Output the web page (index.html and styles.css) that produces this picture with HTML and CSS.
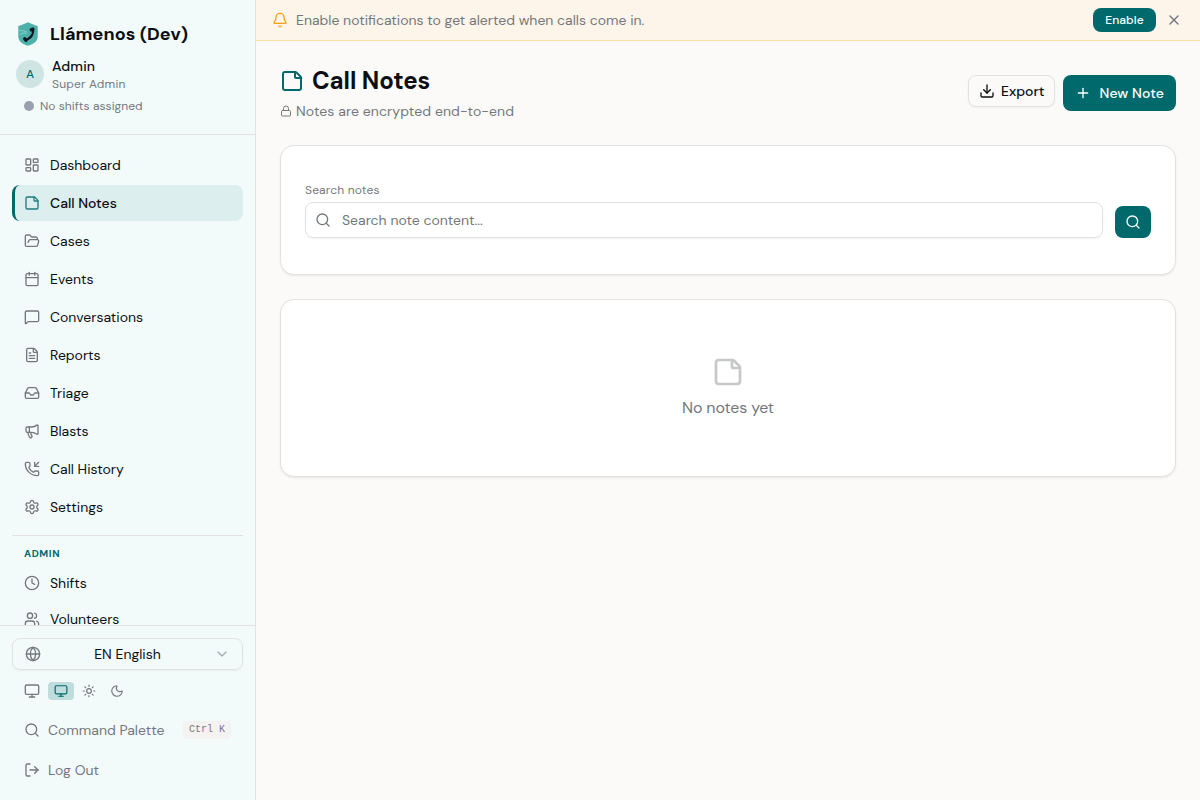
FILE: index.html
```
<!DOCTYPE html>
<html lang="en">
<head>
  <meta charset="UTF-8" />
  <meta name="viewport" content="width=device-width, initial-scale=1.0"/>
  <title>Llámenos (Dev) - Call Notes</title>
  <link rel="stylesheet" href="styles.css">
</head>
<body>
  <!-- icon set -->
  <svg class="icon-defs" aria-hidden="true">
    <symbol id="i-dashboard" viewBox="0 0 24 24"><rect width="7" height="9" x="3" y="3" rx="1"/><rect width="7" height="5" x="14" y="3" rx="1"/><rect width="7" height="9" x="14" y="12" rx="1"/><rect width="7" height="5" x="3" y="16" rx="1"/></symbol>
    <symbol id="i-note" viewBox="0 0 24 24"><path d="M21 9a2.4 2.4 0 0 0-.706-1.706l-3.588-3.588A2.4 2.4 0 0 0 15 3H5a2 2 0 0 0-2 2v14a2 2 0 0 0 2 2h14a2 2 0 0 0 2-2z"/><path d="M15 3v5a1 1 0 0 0 1 1h5"/></symbol>
    <symbol id="i-folder" viewBox="0 0 24 24"><path d="m6 14 1.5-2.9A2 2 0 0 1 9.24 10H20a2 2 0 0 1 1.94 2.5l-1.54 6a2 2 0 0 1-1.95 1.5H4a2 2 0 0 1-2-2V5a2 2 0 0 1 2-2h3.9a2 2 0 0 1 1.69.9l.81 1.2a2 2 0 0 0 1.67.9H18a2 2 0 0 1 2 2v2"/></symbol>
    <symbol id="i-calendar" viewBox="0 0 24 24"><path d="M8 2v4"/><path d="M16 2v4"/><rect width="18" height="18" x="3" y="4" rx="2"/><path d="M3 10h18"/></symbol>
    <symbol id="i-message" viewBox="0 0 24 24"><path d="M22 17a2 2 0 0 1-2 2H6.828a2 2 0 0 0-1.414.586l-2.202 2.202A.71.71 0 0 1 2 21.286V5a2 2 0 0 1 2-2h16a2 2 0 0 1 2 2z"/></symbol>
    <symbol id="i-file" viewBox="0 0 24 24"><path d="M6 22a2 2 0 0 1-2-2V4a2 2 0 0 1 2-2h8a2.4 2.4 0 0 1 1.704.706l3.588 3.588A2.4 2.4 0 0 1 20 8v12a2 2 0 0 1-2 2z"/><path d="M14 2v5a1 1 0 0 0 1 1h5"/><path d="M10 9H8"/><path d="M16 13H8"/><path d="M16 17H8"/></symbol>
    <symbol id="i-inbox" viewBox="0 0 24 24"><path d="M22 12h-6l-2 3h-4l-2-3H2"/><path d="M5.45 5.11 2 12v6a2 2 0 0 0 2 2h16a2 2 0 0 0 2-2v-6l-3.45-6.89A2 2 0 0 0 16.76 4H7.24a2 2 0 0 0-1.79 1.11z"/></symbol>
    <symbol id="i-megaphone" viewBox="0 0 24 24"><path d="M11 6a13 13 0 0 0 8.4-2.8A1 1 0 0 1 21 4v12a1 1 0 0 1-1.6.8A13 13 0 0 0 11 14H5a2 2 0 0 1-2-2V8a2 2 0 0 1 2-2z"/><path d="M6 14a12 12 0 0 0 2.4 7.2 2 2 0 0 0 3.2-2.4A8 8 0 0 1 10 14"/><path d="M8 6v8"/></symbol>
    <symbol id="i-phone" viewBox="0 0 24 24"><path d="M16 2v6h6"/><path d="m22 2-6 6"/><path d="M13.832 16.568a1 1 0 0 0 1.213-.303l.355-.465A2 2 0 0 1 17 15h3a2 2 0 0 1 2 2v3a2 2 0 0 1-2 2A18 18 0 0 1 2 4a2 2 0 0 1 2-2h3a2 2 0 0 1 2 2v3a2 2 0 0 1-.8 1.6l-.468.351a1 1 0 0 0-.292 1.233 14 14 0 0 0 6.392 6.384"/></symbol>
    <symbol id="i-settings" viewBox="0 0 24 24"><path d="M9.671 4.136a2.34 2.34 0 0 1 4.659 0 2.34 2.34 0 0 0 3.319 1.915 2.34 2.34 0 0 1 2.33 4.033 2.34 2.34 0 0 0 0 3.831 2.34 2.34 0 0 1-2.33 4.033 2.34 2.34 0 0 0-3.319 1.915 2.34 2.34 0 0 1-4.659 0 2.34 2.34 0 0 0-3.32-1.915 2.34 2.34 0 0 1-2.33-4.033 2.34 2.34 0 0 0 0-3.831A2.34 2.34 0 0 1 6.35 6.051a2.34 2.34 0 0 0 3.319-1.915"/><circle cx="12" cy="12" r="3"/></symbol>
    <symbol id="i-clock" viewBox="0 0 24 24"><circle cx="12" cy="12" r="10"/><path d="M12 6v6l4 2"/></symbol>
    <symbol id="i-users" viewBox="0 0 24 24"><path d="M16 21v-2a4 4 0 0 0-4-4H6a4 4 0 0 0-4 4v2"/><path d="M16 3.128a4 4 0 0 1 0 7.744"/><path d="M22 21v-2a4 4 0 0 0-3-3.87"/><circle cx="9" cy="7" r="4"/></symbol>
    <symbol id="i-globe" viewBox="0 0 24 24"><circle cx="12" cy="12" r="10"/><path d="M12 2a14.5 14.5 0 0 0 0 20 14.5 14.5 0 0 0 0-20"/><path d="M2 12h20"/></symbol>
    <symbol id="i-chevron" viewBox="0 0 24 24"><path d="m6 9 6 6 6-6"/></symbol>
    <symbol id="i-monitor" viewBox="0 0 24 24"><rect width="20" height="14" x="2" y="3" rx="2"/><path d="M8 21h8"/><path d="M12 17v4"/></symbol>
    <symbol id="i-sun" viewBox="0 0 24 24"><circle cx="12" cy="12" r="4"/><path d="M12 2v2"/><path d="M12 20v2"/><path d="m4.93 4.93 1.41 1.41"/><path d="m17.66 17.66 1.41 1.41"/><path d="M2 12h2"/><path d="M20 12h2"/><path d="m6.34 17.66-1.41 1.41"/><path d="m19.07 4.93-1.41 1.41"/></symbol>
    <symbol id="i-moon" viewBox="0 0 24 24"><path d="M20.985 12.486a9 9 0 1 1-9.473-9.472c.405-.022.617.46.402.803a6 6 0 0 0 8.268 8.268c.344-.215.825-.004.803.401"/></symbol>
    <symbol id="i-search" viewBox="0 0 24 24"><path d="m21 21-4.34-4.34"/><circle cx="11" cy="11" r="8"/></symbol>
    <symbol id="i-logout" viewBox="0 0 24 24"><path d="m16 17 5-5-5-5"/><path d="M21 12H9"/><path d="M9 21H5a2 2 0 0 1-2-2V5a2 2 0 0 1 2-2h4"/></symbol>
    <symbol id="i-bell" viewBox="0 0 24 24"><path d="M10.268 21a2 2 0 0 0 3.464 0"/><path d="M3.262 15.326A1 1 0 0 0 4 17h16a1 1 0 0 0 .74-1.673C19.41 13.956 18 12.499 18 8A6 6 0 0 0 6 8c0 4.499-1.411 5.956-2.738 7.326"/></symbol>
    <symbol id="i-x" viewBox="0 0 24 24"><path d="M18 6 6 18"/><path d="m6 6 12 12"/></symbol>
    <symbol id="i-lock" viewBox="0 0 24 24"><rect width="18" height="11" x="3" y="11" rx="2"/><path d="M7 11V7a5 5 0 0 1 10 0v4"/></symbol>
    <symbol id="i-download" viewBox="0 0 24 24"><path d="M12 15V3"/><path d="M21 15v4a2 2 0 0 1-2 2H5a2 2 0 0 1-2-2v-4"/><path d="m7 10 5 5 5-5"/></symbol>
    <symbol id="i-plus" viewBox="0 0 24 24"><path d="M5 12h14"/><path d="M12 5v14"/></symbol>
  </svg>

  <div class="app">
    <aside class="sidebar">
      <div class="sidebar-header">
        <div class="brand">
          <svg class="logo" viewBox="0 0 24 24">
            <path d="M12 .3c3 1.600 6.200 2.600 9.700 3.700V14c0 5.200-3.700 8.200-9.700 9.700C6 22.200 2.300 19.200 2.300 14V4C5.800 2.900 9 1.900 12 .3z" fill="#4eb0ab"/>
            <path d="M2.300 8.800c3-.6 6-.4 8.500 1.400M4 12.500c2-1.300 4.300-1.700 6.500-1" fill="none" stroke="#7dcac6" stroke-width="1.200"/>
            <path d="M17.200 7.500c.2 4.600-2.700 8.800-7.400 10.700" fill="none" stroke="#0c1a22" stroke-width="2.200"/>
            <path d="M15.200 7.800l1.700-.6M8.700 16.800l1.200 1.500" fill="none" stroke="#0c1a22" stroke-width="3.400" stroke-linecap="round"/>
          </svg>
          <span class="brand-name">Llámenos (Dev)</span>
        </div>
        <div class="user">
          <div class="avatar">A</div>
          <div>
            <div class="user-name">Admin</div>
            <div class="user-role">Super Admin</div>
          </div>
        </div>
        <div class="shift-status"><span class="dot"></span>No shifts assigned</div>
      </div>

      <nav class="nav">
        <a class="nav-item"><svg class="icon"><use href="#i-dashboard"/></svg>Dashboard</a>
        <a class="nav-item active"><svg class="icon"><use href="#i-note"/></svg>Call Notes</a>
        <a class="nav-item"><svg class="icon"><use href="#i-folder"/></svg>Cases</a>
        <a class="nav-item"><svg class="icon"><use href="#i-calendar"/></svg>Events</a>
        <a class="nav-item"><svg class="icon"><use href="#i-message"/></svg>Conversations</a>
        <a class="nav-item"><svg class="icon"><use href="#i-file"/></svg>Reports</a>
        <a class="nav-item"><svg class="icon"><use href="#i-inbox"/></svg>Triage</a>
        <a class="nav-item"><svg class="icon"><use href="#i-megaphone"/></svg>Blasts</a>
        <a class="nav-item"><svg class="icon"><use href="#i-phone"/></svg>Call History</a>
        <a class="nav-item"><svg class="icon"><use href="#i-settings"/></svg>Settings</a>
        <div class="nav-section">
          <div class="nav-heading">ADMIN</div>
          <a class="nav-item"><svg class="icon"><use href="#i-clock"/></svg>Shifts</a>
          <a class="nav-item"><svg class="icon"><use href="#i-users"/></svg>Volunteers</a>
        </div>
      </nav>

      <div class="sidebar-footer">
        <button class="lang-select">
          <svg class="icon"><use href="#i-globe"/></svg>
          <span>EN English</span>
          <svg class="icon chevron"><use href="#i-chevron"/></svg>
        </button>
        <div class="theme-row">
          <svg class="icon"><use href="#i-monitor"/></svg>
          <div class="theme-options">
            <button class="theme-btn selected"><svg class="icon"><use href="#i-monitor"/></svg></button>
            <button class="theme-btn"><svg class="icon"><use href="#i-sun"/></svg></button>
            <button class="theme-btn"><svg class="icon"><use href="#i-moon"/></svg></button>
          </div>
        </div>
        <a class="footer-link"><svg class="icon"><use href="#i-search"/></svg><span>Command Palette</span><kbd>Ctrl K</kbd></a>
        <a class="footer-link"><svg class="icon"><use href="#i-logout"/></svg><span>Log Out</span></a>
      </div>
    </aside>

    <div class="content">
      <div class="banner">
        <svg class="icon bell"><use href="#i-bell"/></svg>
        <p>Enable notifications to get alerted when calls come in.</p>
        <button class="btn btn-primary btn-xs">Enable</button>
        <button class="dismiss"><svg class="icon"><use href="#i-x"/></svg></button>
      </div>

      <main>
        <div class="page-header">
          <div>
            <h1><svg class="icon"><use href="#i-note"/></svg>Call Notes</h1>
            <p class="subtitle"><svg class="icon"><use href="#i-lock"/></svg>Notes are encrypted end-to-end</p>
          </div>
          <div class="actions">
            <button class="btn btn-outline"><svg class="icon"><use href="#i-download"/></svg>Export</button>
            <button class="btn btn-primary"><svg class="icon"><use href="#i-plus"/></svg>New Note</button>
          </div>
        </div>

        <section class="card search-card">
          <div class="field">
            <label for="search">Search notes</label>
            <div class="input-wrap">
              <svg class="icon"><use href="#i-search"/></svg>
              <input type="text" id="search" placeholder="Search note content...">
            </div>
          </div>
          <button class="btn btn-primary btn-search"><svg class="icon"><use href="#i-search"/></svg></button>
        </section>

        <section class="card empty-card">
          <svg class="icon"><use href="#i-note"/></svg>
          <p>No notes yet</p>
        </section>
      </main>
    </div>
  </div>
</body>
</html>
```

FILE: styles.css
```
* {
  box-sizing: border-box;
}
body {
  margin: 0;
  font-family: "DM Sans", Inter, "Liberation Sans", sans-serif;
  font-size: 14px;
  line-height: 20px;
  color: #0b0f14;
  background-color: #fbfaf8;
}
p, h1 {
  margin: 0;
}
button, input {
  font: inherit;
  letter-spacing: inherit;
  color: inherit;
}
.icon-defs {
  display: none;
}
.icon {
  width: 16px;
  height: 16px;
  flex-shrink: 0;
  fill: none;
  stroke: currentColor;
  stroke-width: 2;
  stroke-linecap: round;
  stroke-linejoin: round;
}
.app {
  display: flex;
  height: 100vh;
}

/* sidebar */
.sidebar {
  width: 256px;
  flex-shrink: 0;
  display: flex;
  flex-direction: column;
  background-color: #f2fbfa;
  border-right: 1px solid #e4e2e0;
}
.sidebar-header {
  height: 135px;
  padding: 20px 16px 0;
  border-bottom: 1px solid #e4e2e0;
}
.brand {
  display: flex;
  align-items: center;
  gap: 10px;
  height: 28px;
}
.logo {
  width: 24px;
  height: 24px;
}
.brand-name {
  font-size: 18px;
  line-height: 28px;
  font-weight: 700;
  letter-spacing: 0.07px;
}
.user {
  display: flex;
  align-items: center;
  gap: 8px;
  margin-top: 8px;
}
.avatar {
  width: 28px;
  height: 28px;
  border-radius: 50%;
  background-color: #cee5e4;
  color: #00696b;
  font-size: 12px;
  font-weight: 500;
  line-height: 28px;
  text-align: center;
}
.user-name {
  font-weight: 500;
  line-height: 20px;
  letter-spacing: 0.15px;
}
.user-role {
  font-size: 12px;
  line-height: 16px;
  letter-spacing: 0.2px;
  color: #74787e;
}
.shift-status {
  display: flex;
  align-items: center;
  gap: 6px;
  margin-top: 6px;
  padding-left: 8px;
  font-size: 12px;
  line-height: 16px;
  letter-spacing: 0.05px;
  color: #74787e;
}
.dot {
  width: 10px;
  height: 10px;
  border-radius: 50%;
  background-color: #99a1af;
}
.nav {
  flex: 1;
  min-height: 0;
  overflow: hidden;
  padding: 12px;
}
.nav-item {
  display: flex;
  align-items: center;
  gap: 10px;
  height: 36px;
  margin-bottom: 2px;
  padding: 0 12px;
  border-radius: 8px;
}
.nav-item .icon {
  color: #74787e;
}
.nav-item.active {
  padding-left: 9px;
  border-left: 3px solid #00696b;
  background-color: #dceeee;
  font-weight: 500;
}
.nav-item.active .icon {
  color: #00696b;
  opacity: 0.85;
}
.nav-section {
  margin-top: 10px;
  border-top: 1px solid #e4e2e0;
}
.nav-section .nav-item {
  margin-bottom: 0;
}
.nav-heading {
  padding: 10px 12px 4px;
  font-size: 10px;
  line-height: 15px;
  font-weight: 700;
  letter-spacing: 0.6px;
  color: #00696b;
}
.sidebar-footer {
  height: 175px;
  padding: 12px;
  border-top: 1px solid #e4e2e0;
  color: #74787e;
}
.lang-select {
  display: flex;
  align-items: center;
  justify-content: space-between;
  width: 100%;
  height: 32px;
  padding: 0 12px;
  border: 1px solid #e4e2e0;
  border-radius: 8px;
  background-color: transparent;
  box-shadow: 0 1px 2px rgba(0, 0, 0, 0.05);
}
.lang-select span {
  color: #0b0f14;
}
.chevron {
  opacity: 0.6;
}
.theme-row {
  display: flex;
  align-items: center;
  gap: 8px;
  height: 42px;
  padding: 0 12px;
}
.theme-options {
  display: flex;
  gap: 2px;
}
.theme-btn {
  display: flex;
  align-items: center;
  justify-content: center;
  width: 26px;
  height: 18px;
  padding: 0;
  border: none;
  border-radius: 4px;
  background-color: transparent;
}
.theme-btn .icon {
  width: 14px;
  height: 14px;
}
.theme-btn.selected {
  background-color: #bfdddc;
  color: #00696b;
}
.footer-link {
  display: flex;
  align-items: center;
  gap: 8px;
  height: 36px;
  padding: 0 12px;
  margin-bottom: 4px;
}
kbd {
  height: 18px;
  margin-left: auto;
  padding: 0 6px;
  border-radius: 4px;
  background-color: #f5f3f1;
  font-family: "Liberation Mono", monospace;
  font-size: 10px;
  line-height: 18px;
}

/* notification banner */
.content {
  flex: 1;
  min-width: 0;
}
.banner {
  display: flex;
  align-items: center;
  height: 41px;
  padding: 0 16px;
  border-bottom: 1px solid #ffdfa8;
  background-color: #fdf4ea;
  color: #74787e;
}
.banner p {
  flex: 1;
  margin-left: 8px;
}
.bell {
  color: #fb9f10;
}
.dismiss {
  display: flex;
  margin-left: 8px;
  padding: 2px;
  border: none;
  background: none;
}

/* buttons */
.btn {
  display: flex;
  align-items: center;
  justify-content: center;
  gap: 8px;
  height: 36px;
  padding: 0 12px;
  border: none;
  border-radius: 8px;
  font-weight: 500;
}
.btn-primary {
  background-color: #00696b;
  color: #fff;
  letter-spacing: 0.1px;
}
.btn-outline {
  height: 32px;
  gap: 6px;
  padding: 0 10px;
  border: 1px solid #e4e2e0;
  background-color: #fbfaf8;
  box-shadow: 0 1px 2px rgba(0, 0, 0, 0.05);
}
.btn-xs {
  width: 63px;
  height: 24px;
  font-size: 12px;
}

main {
  padding: 24px;
}
.page-header {
  display: flex;
  justify-content: space-between;
  align-items: center;
  height: 56px;
  margin-bottom: 24px;
}
h1 {
  display: flex;
  align-items: center;
  gap: 8px;
  font-size: 24px;
  line-height: 32px;
  font-weight: 700;
  letter-spacing: -0.1px;
}
h1 .icon {
  width: 24px;
  height: 24px;
  color: #00696b;
}
.subtitle {
  display: flex;
  align-items: center;
  gap: 4px;
  margin-top: 4px;
  letter-spacing: 0.09px;
  color: #74787e;
}
.subtitle .icon {
  width: 12px;
  height: 12px;
}
.actions {
  display: flex;
  align-items: flex-start;
  gap: 8px;
}

/* cards */
.card {
  border: 1px solid #e4e2e0;
  border-radius: 14px;
  background-color: #fff;
  box-shadow: 0 1px 2px rgba(0, 0, 0, 0.08);
}
.search-card {
  display: flex;
  align-items: flex-end;
  gap: 12px;
  height: 130px;
  margin-bottom: 24px;
  padding: 0 24px 36px;
}
.field {
  flex: 1;
}
.field label {
  display: block;
  margin-bottom: 4px;
  font-size: 12px;
  line-height: 16px;
  letter-spacing: 0.17px;
  color: #74787e;
}
.input-wrap {
  display: flex;
  align-items: center;
  gap: 11px;
  height: 36px;
  padding: 0 9px;
  border: 1px solid #e4e2e0;
  border-radius: 8px;
  color: #74787e;
  box-shadow: 0 1px 2px rgba(0, 0, 0, 0.05);
}
.input-wrap input {
  flex: 1;
  padding: 0;
  border: none;
  outline: none;
  background: none;
}
.input-wrap input::placeholder {
  color: #74787e;
}
.btn-search {
  width: 36px;
  height: 32px;
  padding: 0;
}
.empty-card {
  display: flex;
  flex-direction: column;
  align-items: center;
  height: 178px;
  padding-top: 56px;
  font-size: 16px;
  line-height: 24px;
  letter-spacing: -0.16px;
  color: #74787e;
}
.empty-card .icon {
  width: 32px;
  height: 32px;
  margin-bottom: 8px;
  opacity: 0.4;
}
```
